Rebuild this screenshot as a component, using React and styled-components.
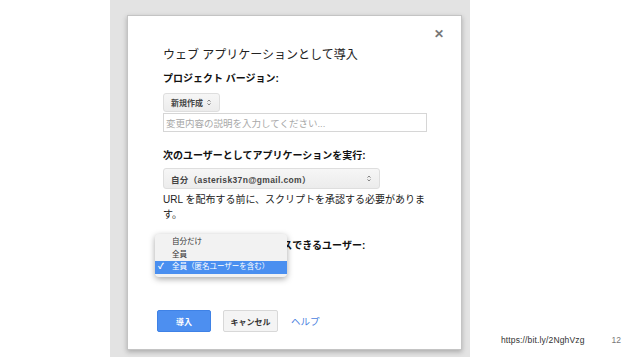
import React from "react";
import styled, { createGlobalStyle } from "styled-components";

const GlobalStyle = createGlobalStyle`
  html, body {
    margin: 0;
    padding: 0;
    background: #ffffff;
  }
  body {
    font-family: "Liberation Sans", "Noto Sans CJK JP", sans-serif;
  }
`;

const Slide = styled.div`
  width: 638px;
  height: 359px;
  display: flex;
  flex-direction: row;
  background: #ffffff;
  overflow: hidden;
`;

const Panel = styled.div`
  margin-left: 110px;
  width: 360px;
  height: 357px;
  background: #e3e3e3;
  padding: 15px 0 0 17px;
  box-sizing: border-box;
`;

const Dialog = styled.div`
  width: 335px;
  height: 335px;
  box-sizing: border-box;
  background: #ffffff;
  border: 1px solid #c4c4c4;
  box-shadow: 0 2px 5px rgba(0, 0, 0, 0.25);
  display: flex;
  flex-direction: column;
  padding: 0 34px 0 35px;
`;

const CloseRow = styled.div`
  height: 30px;
  padding-top: 6px;
  box-sizing: border-box;
  display: flex;
  align-items: center;
  justify-content: flex-end;
  margin-right: -17px;
`;

const Close = styled.span`
  font-size: 12px;
  font-weight: bold;
  color: #777;
  line-height: 12px;
`;

const Title = styled.div`
  font-size: 12px;
  line-height: 18px;
  color: #222;
`;

const Label = styled.div`
  font-size: 10px;
  font-weight: bold;
  line-height: 14px;
  color: #111;
  margin-top: ${(p) => p.$top}px;
  white-space: nowrap;
`;

const Select = styled.div`
  display: flex;
  align-items: center;
  justify-content: space-between;
  gap: 4px;
  width: ${(p) => (p.$width ? `${p.$width}px` : "auto")};
  align-self: flex-start;
  height: ${(p) => p.$height}px;
  margin-top: ${(p) => p.$top}px;
  padding: 0 8px 0 7px;
  box-sizing: border-box;
  background: linear-gradient(#f6f6f6, #ececec);
  border: 1px solid #dedede;
  border-radius: 3px;
  font-size: 8px;
  font-weight: bold;
  color: #444;
`;

const Email = styled.span`
  font-size: 8.5px;
  letter-spacing: 0.35px;
`;

const Arrows = () => (
  <svg width="4" height="7" viewBox="0 0 4 7">
    <path d="M0.5 2.6 L2 1 L3.5 2.6" fill="none" stroke="#777" strokeWidth="0.9" />
    <path d="M0.5 4.4 L2 6 L3.5 4.4" fill="none" stroke="#777" strokeWidth="0.9" />
  </svg>
);

const Input = styled.div`
  height: 19px;
  margin-top: 1px;
  border: 1px solid #d6d6d6;
  box-sizing: border-box;
  display: flex;
  align-items: center;
  padding-left: 2px;
  font-size: 9.5px;
  color: #a8a8a8;
  white-space: nowrap;
`;

const Note = styled.div`
  margin-top: 3px;
  font-size: 10px;
  line-height: 15px;
  color: #222;
`;

const AccessField = styled.div`
  position: relative;
  height: 20px;
  margin-top: 3px;
`;

const Menu = styled.div`
  position: absolute;
  top: -22px;
  left: -8px;
  width: 132px;
  padding: 2px 0 3px;
  background: #f2f2f2;
  border-radius: 4px;
  box-shadow: 0 2px 6px rgba(0, 0, 0, 0.35);
  display: flex;
  flex-direction: column;
`;

const MenuItem = styled.div`
  position: relative;
  height: 12.5px;
  line-height: 12.5px;
  padding-left: 17px;
  font-size: 7.5px;
  color: ${(p) => (p.$active ? "#ffffff" : "#333")};
  background: ${(p) => (p.$active ? "#4a8ff0" : "transparent")};
  white-space: nowrap;
`;

const Check = styled.span`
  position: absolute;
  left: 3px;
  top: 0;
  font-size: 8px;
  font-weight: bold;
`;

const ButtonRow = styled.div`
  display: flex;
  align-items: center;
  gap: 12px;
  margin-top: 34px;
  margin-left: -6px;
`;

const Button = styled.button`
  height: 22px;
  width: ${(p) => p.$width}px;
  border-radius: 2px;
  font-family: inherit;
  font-size: 8px;
  font-weight: bold;
  padding: 0;
  color: ${(p) => (p.$primary ? "#ffffff" : "#333")};
  background: ${(p) => (p.$primary ? "#4d8ff0" : "#f4f4f4")};
  border: 1px solid ${(p) => (p.$primary ? "#3f82e6" : "#d8d8d8")};
`;

const HelpLink = styled.a`
  font-size: 9.5px;
  color: #4a7fe0;
  text-decoration: none;
  margin-left: 1px;
`;

const Aside = styled.div`
  flex: 1;
  display: flex;
  align-items: flex-end;
  justify-content: flex-end;
  padding: 0 17px 14px 0;
  gap: 27px;
`;

const FooterUrl = styled.span`
  font-size: 8.5px;
  letter-spacing: 0.15px;
  color: #333;
`;

const PageNum = styled.span`
  font-size: 8.5px;
  color: #777;
`;

export default function App() {
  return (
    <>
      <GlobalStyle />
      <Slide>
        <Panel>
          <Dialog>
            <CloseRow>
              <Close>✕</Close>
            </CloseRow>
            <Title>ウェブ アプリケーションとして導入</Title>
            <Label $top={8}>プロジェクト バージョン:</Label>
            <Select $height={19} $top={7}>
              <span>新規作成</span>
              <Arrows />
            </Select>
            <Input>変更内容の説明を入力してください...</Input>
            <Label $top={17}>次のユーザーとしてアプリケーションを実行:</Label>
            <Select $width={217} $height={21} $top={5}>
              <Email>自分（asterisk37n@gmail.com）</Email>
              <Arrows />
            </Select>
            <Note>URL を配布する前に、スクリプトを承認する必要があります。</Note>
            <Label $top={17}>アプリケーションにアクセスできるユーザー:</Label>
            <AccessField>
              <Menu>
                <MenuItem>自分だけ</MenuItem>
                <MenuItem>全員</MenuItem>
                <MenuItem $active>
                  <Check>✓</Check>
                  全員（匿名ユーザーを含む）
                </MenuItem>
              </Menu>
            </AccessField>
            <ButtonRow>
              <Button $primary $width={54}>導入</Button>
              <Button $width={55}>キャンセル</Button>
              <HelpLink href="#">ヘルプ</HelpLink>
            </ButtonRow>
          </Dialog>
        </Panel>
        <Aside>
          <FooterUrl>https://bit.ly/2NghVzg</FooterUrl>
          <PageNum>12</PageNum>
        </Aside>
      </Slide>
    </>
  );
}
